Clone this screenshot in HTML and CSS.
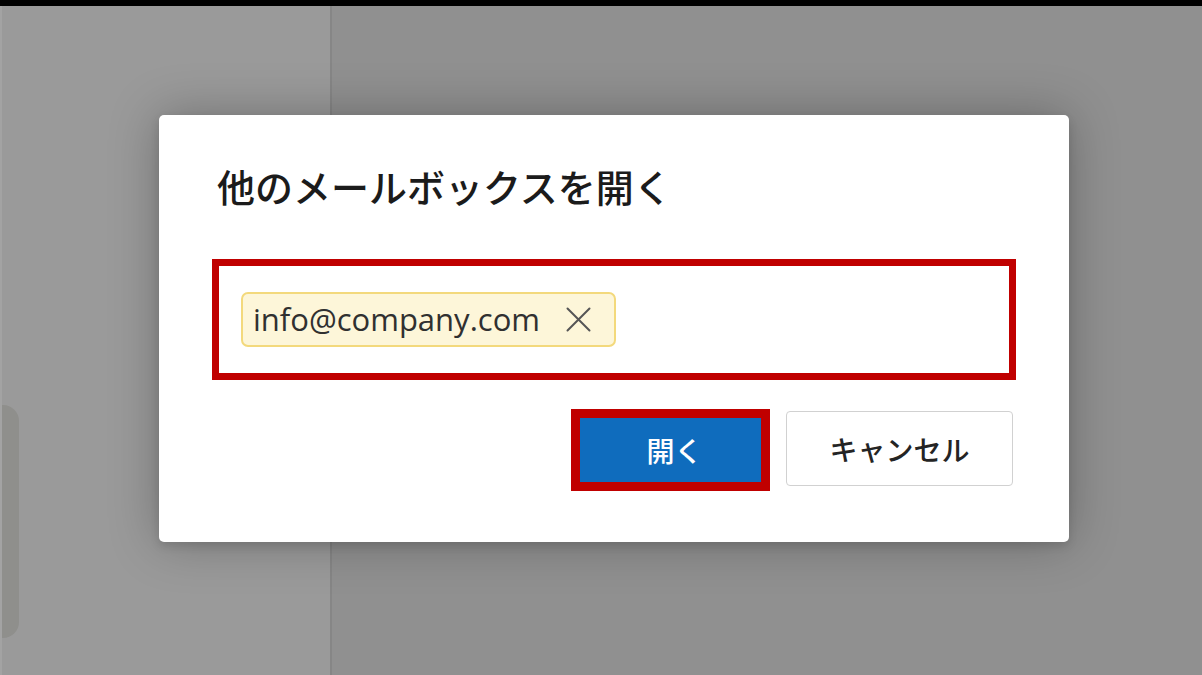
FILE: index.html
```html
<!DOCTYPE html>
<html lang="ja">
<head>
<meta charset="utf-8">
<title>他のメールボックスを開く</title>
<link rel="stylesheet" href="styles.css">
</head>
<body>
<div class="topbar"></div>
<div class="app">
  <div class="leftpane">
    <div class="edgetab"></div>
  </div>
  <div class="divider"></div>
  <div class="rightpane"></div>
</div>
<div class="dialog" role="dialog">
  <h1 class="title">他のメールボックスを開く</h1>
  <div class="picker">
    <span class="chip">
      <span class="chip-text">info@company.com</span>
      <svg class="chip-x" width="25" height="25" viewBox="0 0 25 25" aria-hidden="true">
        <path d="M1.5 1.5 L23.5 23.5 M23.5 1.5 L1.5 23.5" stroke="#555" stroke-width="2" fill="none" stroke-linecap="round"/>
      </svg>
    </span>
  </div>
  <div class="actions">
    <div class="primary-wrap"><button class="btn btn-primary">開く</button></div>
    <button class="btn btn-secondary">キャンセル</button>
  </div>
</div>
</body>
</html>
```

FILE: styles.css
```css
html, body {
  margin: 0;
  padding: 0;
  height: 100%;
  overflow: hidden;
}
body {
  background: #929292;
  font-family: "Noto Sans CJK JP", "Noto Sans", sans-serif;
  position: relative;
}
.topbar {
  height: 6px;
  background: #000;
}
.app {
  display: flex;
  height: 669px;
}
.leftpane {
  width: 328px;
  background: #9a9a9a;
  border-left: 2px solid #a3a3a3;
  display: flex;
  flex-direction: column;
}
.edgetab {
  margin-top: 399px;
  width: 17px;
  height: 233px;
  background: #8f8f8c;
  border-radius: 0 16px 16px 0;
}
.divider {
  width: 2px;
  background: #868686;
}
.rightpane {
  flex: 1;
  background: #909090;
}
.dialog {
  position: absolute;
  left: 159px;
  top: 115px;
  width: 910px;
  height: 427px;
  box-sizing: border-box;
  background: #fff;
  border-radius: 5px;
  box-shadow: 0 0 50px rgba(0, 0, 0, 0.28), 0 4px 10px rgba(0, 0, 0, 0.12);
  padding: 43px 53px 0 53px;
}
.title {
  margin: 0 0 0 5px;
  font-size: 38px;
  line-height: 56px;
  font-weight: 500;
  color: #1b1b1b;
  letter-spacing: 0;
}
.picker {
  margin-top: 45px;
  height: 121px;
  box-sizing: border-box;
  border: 7px solid #c00000;
  padding: 26px 22px;
  display: flex;
  align-items: flex-start;
}
.chip {
  display: inline-flex;
  align-items: center;
  height: 55px;
  box-sizing: border-box;
  background: #fdf6d9;
  border: 2px solid #f3d97c;
  border-radius: 7px;
  padding: 0 23px 0 10px;
  gap: 26px;
}
.chip-text {
  font-family: "Open Sans", "Noto Sans", sans-serif;
  font-size: 31px;
  color: #303030;
  line-height: 1;
  letter-spacing: 0;
}
.chip-x {
  display: block;
}
.actions {
  margin-top: 29px;
  display: flex;
  justify-content: flex-end;
  align-items: flex-start;
  gap: 16px;
  padding-right: 3px;
}
.primary-wrap {
  border: 9px solid #c00000;
  display: flex;
}
.btn {
  font-family: "Noto Sans CJK JP", "Noto Sans", sans-serif;
  font-size: 28px;
  font-weight: 500;
  margin: 0;
  cursor: pointer;
}
.btn-primary {
  width: 181px;
  height: 64px;
  background: #0f6cbd;
  color: #fff;
  border: none;
  border-radius: 0;
  padding: 0 0 0 8px;
}
.btn-secondary {
  margin-top: 2px;
  width: 227px;
  height: 75px;
  background: #fff;
  color: #242424;
  border: 1px solid #d1d1d1;
  border-radius: 4px;
}
```
